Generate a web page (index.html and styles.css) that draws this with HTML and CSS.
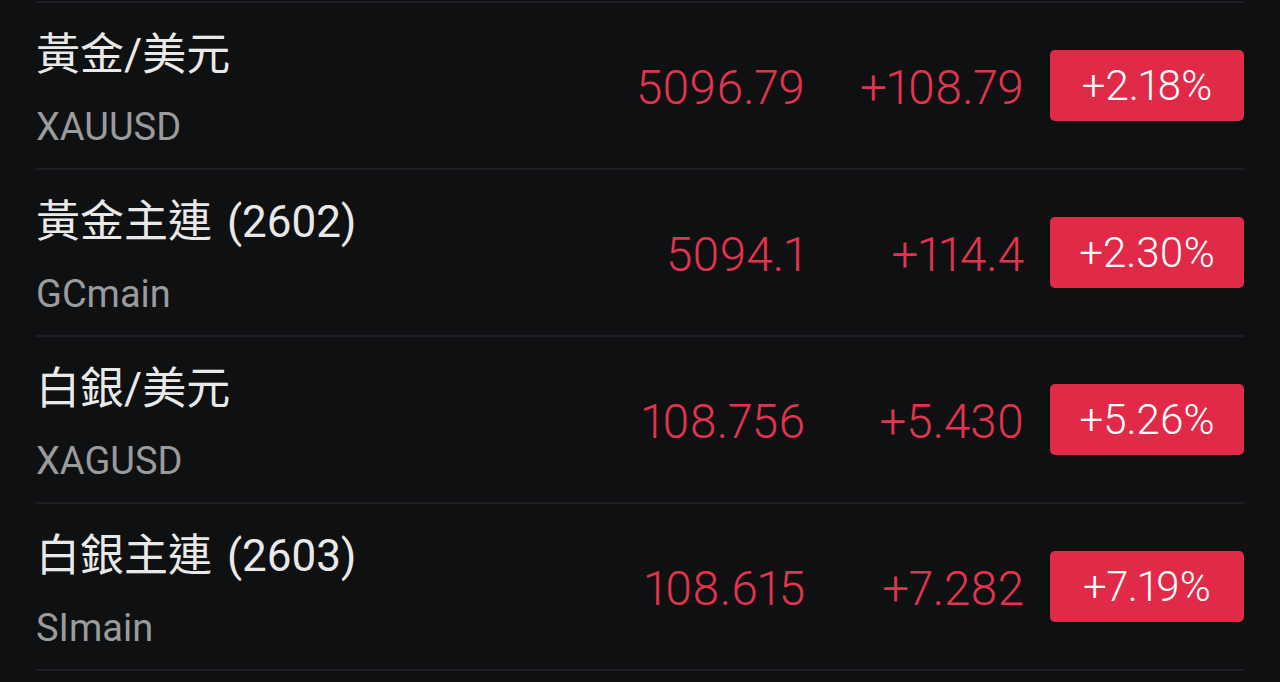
FILE: index.html
```html
<!DOCTYPE html>
<html lang="zh-Hant">
<head>
<meta charset="utf-8">
<link rel="stylesheet" href="styles.css">
</head>
<body>
<div class="list">
  <div class="row">
    <div class="info">
      <div class="name">黃金/美元</div>
      <div class="sym">XAUUSD</div>
    </div>
    <div class="price">5096.79</div>
    <div class="change">+108.79</div>
    <div class="badge">+2.18%</div>
  </div>
  <div class="row">
    <div class="info">
      <div class="name">黃金主連 (2602)</div>
      <div class="sym">GCmain</div>
    </div>
    <div class="price">5094.1</div>
    <div class="change">+114.4</div>
    <div class="badge">+2.30%</div>
  </div>
  <div class="row">
    <div class="info">
      <div class="name">白銀/美元</div>
      <div class="sym">XAGUSD</div>
    </div>
    <div class="price">108.756</div>
    <div class="change">+5.430</div>
    <div class="badge">+5.26%</div>
  </div>
  <div class="row">
    <div class="info">
      <div class="name">白銀主連 (2603)</div>
      <div class="sym">SImain</div>
    </div>
    <div class="price">108.615</div>
    <div class="change">+7.282</div>
    <div class="badge">+7.19%</div>
  </div>
  <div class="end"></div>
</div>
</body>
</html>
```

FILE: styles.css
```css
html, body {
  margin: 0;
  padding: 0;
  background: #0f1012;
  height: 682px;
  overflow: hidden;
}
.list {
  padding: 1px 36px 0 36px;
}
.row {
  display: flex;
  align-items: center;
  height: 165px;
  border-top: 2px solid #1d1e21;
}
.end {
  border-top: 2px solid #1d1e21;
}
.info {
  flex: 1;
  align-self: flex-start;
  padding-top: 30px;
}
.name {
  font-family: Roboto, "Noto Sans CJK TC", sans-serif;
  font-size: 44px;
  line-height: 44px;
  word-spacing: 4px;
  color: #e9e9ea;
}
.sym {
  margin-top: 28px;
  font-family: Roboto, sans-serif;
  font-size: 38px;
  line-height: 44px;
  color: #9a9b9d;
}
.price, .change {
  font-family: Roboto, sans-serif;
  font-weight: 300;
  font-size: 47.5px;
  font-variant-numeric: proportional-nums;
  color: #e2344f;
  text-align: right;
  padding-top: 4px;
}
.price {
  width: 260px;
}
.change {
  width: 219px;
}
.badge {
  margin-left: 26px;
  width: 194px;
  height: 71px;
  border-radius: 5px;
  background: #e02a48;
  color: #ffffff;
  font-family: Roboto, sans-serif;
  font-weight: 300;
  font-size: 42px;
  font-variant-numeric: proportional-nums;
  display: flex;
  align-items: center;
  justify-content: center;
}
```
